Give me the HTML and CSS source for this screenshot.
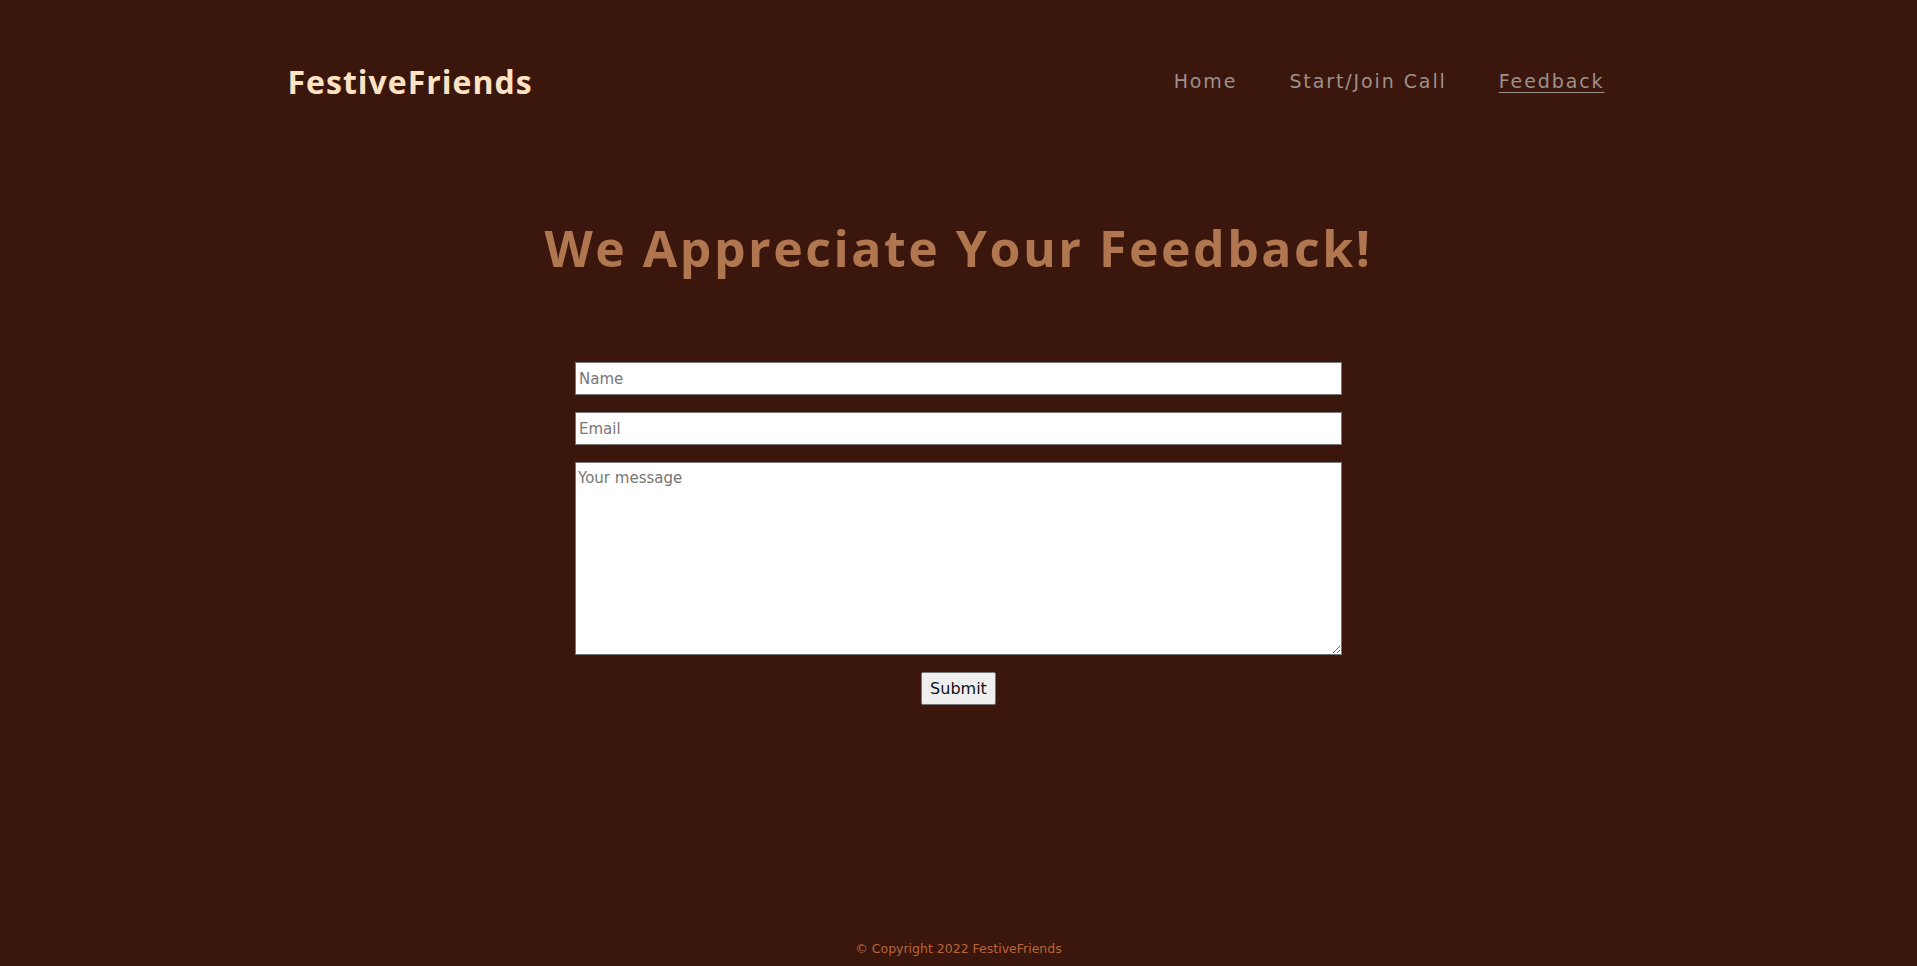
FILE: index.html
```html
<!DOCTYPE html>
<html lang="en">
<head>
<meta charset="utf-8">
<title>FestiveFriends - Feedback</title>
<link rel="stylesheet" href="styles.css">
</head>
<body>
<header class="site-header">
  <div class="logo">FestiveFriends</div>
  <nav class="nav">
    <a class="nav-link" href="#">Home</a>
    <a class="nav-link" href="#">Start/Join Call</a>
    <a class="nav-link nav-link-active" href="#">Feedback</a>
  </nav>
</header>
<main class="main">
  <h1 class="title">We Appreciate Your Feedback!</h1>
  <form class="feedback-form">
    <input class="field" type="text" placeholder="Name">
    <input class="field" type="email" placeholder="Email">
    <textarea class="field field-message" placeholder="Your message"></textarea>
    <button class="submit" type="button">Submit</button>
  </form>
</main>
<footer class="site-footer">© Copyright 2022 FestiveFriends</footer>
</body>
</html>
```
FILE: styles.css
```css
* { box-sizing: border-box; }
html, body { height: 100%; }
body {
  margin: 0;
  background: #3a160c;
  font-family: "DejaVu Sans", "Open Sans", sans-serif;
  display: flex;
  flex-direction: column;
  min-height: 100vh;
}
.site-header {
  width: 70%;
  margin: 0 auto;
  height: 162px;
  display: flex;
  align-items: center;
  justify-content: space-between;
  padding-left: 0;
  padding-right: 25px;
}
.logo {
  font-family: "Open Sans", sans-serif;
  font-weight: 700;
  font-size: 32px;
  letter-spacing: 1px;
  color: #fde3c3;
}
.nav {
  display: flex;
  gap: 52px;
}
.nav-link {
  font-family: "DejaVu Sans", sans-serif;
  font-size: 19px;
  letter-spacing: 1.9px;
  color: #9e908b;
  text-decoration: none;
}
.nav-link-active { text-decoration: underline; text-underline-offset: 4px; }
.main { flex: 1; }
.title {
  margin: 53px 0 0;
  text-align: center;
  font-family: "Open Sans", sans-serif;
  font-weight: 700;
  font-size: 50px;
  line-height: 67px;
  letter-spacing: 2.5px;
  color: #b0764f;
}
.feedback-form {
  width: 767px;
  margin: 80px auto 0;
  display: flex;
  flex-direction: column;
  align-items: center;
  gap: 17px;
}
.field {
  width: 100%;
  height: 33px;
  border: 1px solid #767676;
  background: #fff;
  padding: 2px 3px;
  font-family: "DejaVu Sans", sans-serif;
  font-size: 15px;
  color: #222;
}
.field::placeholder { color: #767676; }
.field-message {
  height: 193px;
  padding: 6px 2px;
  resize: vertical;
}
.submit {
  width: 75px;
  height: 33px;
  background: #efefef;
  border: 1px solid #767676;
  border-radius: 2px;
  font-family: "DejaVu Sans", sans-serif;
  font-size: 16px;
  color: #111;
  padding: 0;
}
.site-footer {
  text-align: center;
  font-family: "DejaVu Sans", sans-serif;
  font-size: 12.5px;
  color: #b6673d;
  padding-bottom: 10px;
}
```
